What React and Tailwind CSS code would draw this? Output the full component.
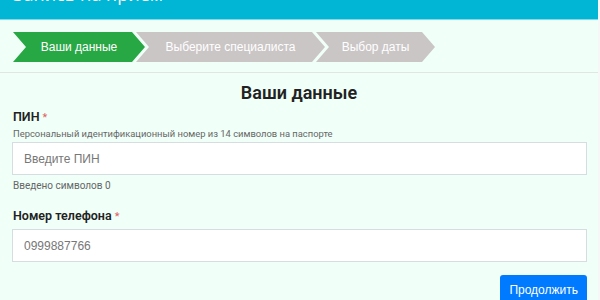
export default function App() {
  const steps = [
    { label: "Ваши данные", w: "w-[132px]", active: true },
    { label: "Выберите специалиста", w: "w-[189px]", active: false },
    { label: "Выбор даты", w: "w-[119px]", active: false },
  ];

  return (
    <div className="w-[600px] h-[300px] overflow-hidden bg-[#f7f7f7]">
      <div className="w-[598px] h-[300px] bg-[#f0fff8] flex flex-col">
        {/* Header */}
        <div className="h-[20px] overflow-hidden bg-[#00b6d4] border-b border-[#7fdbe9] shrink-0">
          <div className="-mt-[15px] pl-[13px] text-[18px] leading-[18px] text-white" style={{ fontFamily: "'Open Sans', sans-serif" }}>
            Запись на прием
          </div>
        </div>

        {/* Steps */}
        <div className="flex pl-[13px] pt-[12px] pb-[10px] border-b border-[#dfe6e3] shrink-0" style={{ fontFamily: "'Liberation Sans', Arial, sans-serif" }}>
          {steps.map((s, i) => (
            <div
              key={s.label}
              className={`${s.w} h-[30px] flex items-center justify-center text-[12px] text-white ${i > 0 ? "-ml-[9px]" : ""} ${s.active ? "bg-[#28a745]" : "bg-[#cbc6c6]"} [clip-path:polygon(0_0,calc(100%-13px)_0,100%_50%,calc(100%-13px)_100%,0_100%,13px_50%)]`}
            >
              {s.label}
            </div>
          ))}
        </div>

        {/* Form */}
        <div className="px-[12px] flex flex-col" style={{ fontFamily: "Roboto, sans-serif" }}>
          <h2 className="text-center text-[18px] font-semibold text-[#222] mt-[8px] leading-[24px]">Ваши данные</h2>
          <div className="mt-[3px] pl-[1px] text-[12.5px] font-semibold text-[#222] leading-[18px]">
            ПИН <span className="text-[11px] font-normal text-[#e06060]">*</span>
          </div>
          <div className="pl-[1px] text-[9.4px] text-[#666] leading-[13px]">
            Персональный идентификационный номер из 14 символов на паспорте
          </div>
          <input
            className="mt-[2px] w-[575px] h-[33px] bg-white border border-[#d6dde0] px-[11px] text-[12px] text-[#555] placeholder-[#777] outline-none"
            style={{ fontFamily: "'Liberation Sans', Arial, sans-serif" }}
            placeholder="Введите ПИН"
          />
          <div className="mt-[4px] pl-[1px] text-[10px] text-[#666] leading-[14px]">Введено символов 0</div>
          <div className="mt-[14px] pl-[1px] text-[12.5px] font-semibold text-[#222] leading-[18px]">
            Номер телефона <span className="text-[11px] font-normal text-[#e06060]">*</span>
          </div>
          <input
            className="mt-[3px] w-[575px] h-[33px] bg-white border border-[#d6dde0] px-[11px] text-[12px] text-[#777] outline-none"
            style={{ fontFamily: "'Liberation Sans', Arial, sans-serif" }}
            defaultValue="0999887766"
          />
          <div className="flex justify-end mt-[13px] w-[575px]">
            <button
              className="h-[30px] px-[9px] bg-[#007bff] text-white text-[12px] rounded-[3px]"
              style={{ fontFamily: "'Liberation Sans', Arial, sans-serif" }}
            >
              Продолжить
            </button>
          </div>
        </div>
      </div>
    </div>
  );
}
